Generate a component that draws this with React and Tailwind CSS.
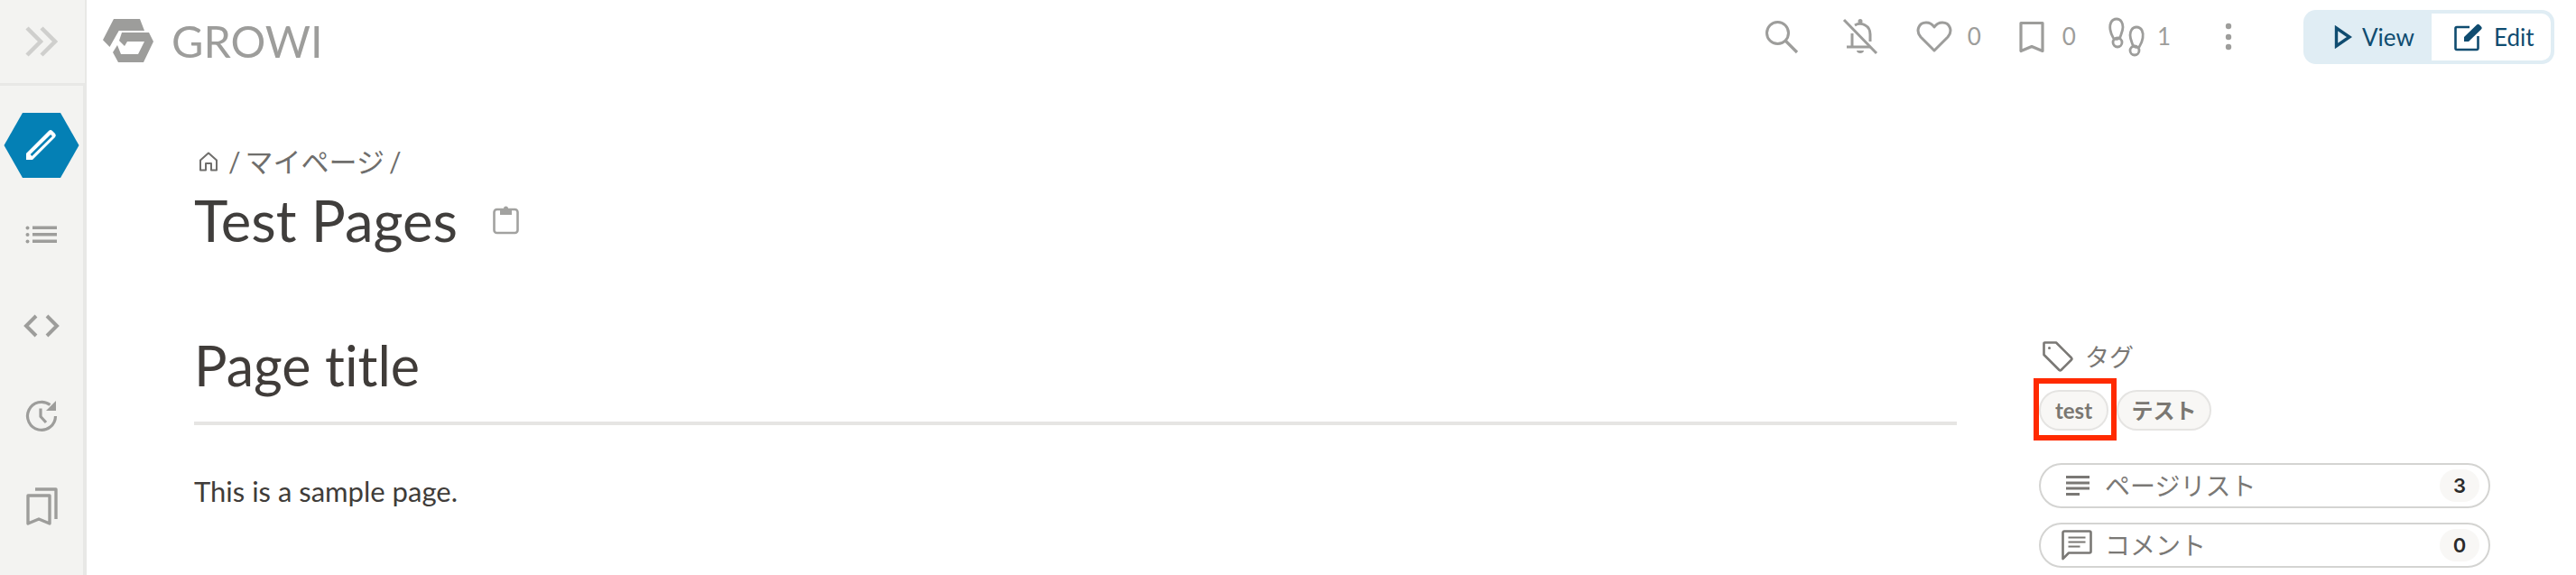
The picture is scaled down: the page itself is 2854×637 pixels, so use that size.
import React from 'react';

const Icon = ({ className, viewBox = '0 0 24 24', children }) => (
  <svg className={className} viewBox={viewBox} fill="none" stroke="currentColor" strokeWidth="2" strokeLinejoin="round">
    {children}
  </svg>
);

const GrowiLogo = () => (
  <svg className="w-[70px] h-[60px] text-[#9d9d9b]" viewBox="0 0 70 60" fill="currentColor">
    <polygon points="4,29.3 16,6 45,6 50,19 21.7,19 11.5,37" />
    <polygon points="25,21 55,21 60,31 49,54 21,54 15,43 20,35 24,45 43,45 50,31 31,31 28,36 22,30" />
  </svg>
);

const SidebarNav = () => (
  <div className="flex w-[96px] flex-col bg-[#f3f3f1]">
    <div className="flex h-[95px] items-center justify-center border-r-2 border-b-[3px] border-[#e8e8e6] pr-[3px]">
      <Icon className="w-[36px] h-[34px] text-[#cfcfcd]" viewBox="0 0 36 34">
        <path d="M2 2l15 15L2 32M18 2l15 15-15 15" strokeWidth="4.5" strokeLinejoin="miter" />
      </Icon>
    </div>
    <div className="flex flex-1 flex-col items-center border-r-4 border-[#e8e8e6] pt-[30px] text-[#9d9d9b]">
      <div className="relative flex h-[72px] w-[84px] items-center justify-center">
        <svg className="absolute inset-0 w-[84px] h-[72px]" viewBox="0 0 84 72">
          <polygon points="0.5,36 21,0 63,0 83.5,36 63,72 21,72" fill="#0480b5" />
        </svg>
        <svg className="relative w-[38px] h-[38px] text-white" viewBox="0 0 38 38" fill="none" stroke="currentColor">
          <path d="M2 28L27 3a3 3 0 0 1 4 0l3 3a3 3 0 0 1 0 4L9 35H2z" fill="currentColor" stroke="none" />
          <path d="M7.500 30L30 8" stroke="#0480b5" strokeWidth="2.500" />
        </svg>
      </div>
      <svg className="mt-[53px] w-[36px] h-[20px]" viewBox="0 0 36 20" fill="currentColor">
        <circle cx="2.500" cy="2.500" r="2" />
        <circle cx="2.500" cy="10" r="2" />
        <circle cx="2.500" cy="17.500" r="2" />
        <rect x="8" y="0.500" width="27" height="3.500" />
        <rect x="8" y="8" width="27" height="3.500" />
        <rect x="8" y="15.500" width="27" height="3.500" />
      </svg>
      <Icon className="mt-[78px] w-[42px] h-[26px]" viewBox="0 0 42 26">
        <path d="M15 2L4 13l11 11M27 2l11 11-11 11" strokeWidth="4" strokeLinejoin="miter" />
      </Icon>
      <Icon className="mt-[69px] w-[36px] h-[36px]" viewBox="0 0 36 36">
        <path d="M33.500 18a15.500 15.500 0 1 1-6-12.400" strokeWidth="3.200" />
        <path d="M34 1v11H23" fill="currentColor" stroke="none" />
        <path d="M17 9.500v9l6 6.500" strokeWidth="3.200" />
      </Icon>
      <Icon className="mt-[60px] w-[36px] h-[44px]" viewBox="0 0 36 44">
        <path d="M3 10h24v31l-12-5-12 5z" strokeWidth="3.400" />
        <path d="M11 3h23v33" strokeWidth="3.400" />
      </Icon>
    </div>
  </div>
);

const Count = ({ children }) => (
  <span className="text-[26px] leading-none text-[#9d9d9b]">{children}</span>
);

const TopBar = () => (
  <div className="flex h-[94px] shrink-0 items-start pl-[14px] pr-[24px]">
    <div className="flex items-center pt-[15px]">
      <GrowiLogo />
      <span className="ml-[10px] text-[48.500px] leading-[60px] text-[#9d9d9b]">GROWI</span>
    </div>
    <div className="ml-auto flex items-center pt-[11px] text-[#9d9d9b]">
      <Icon className="w-[38px] h-[38px]" viewBox="0 0 38 38">
        <circle cx="14.500" cy="14.500" r="12" strokeWidth="3" />
        <path d="M23.500 23.500L36 36" strokeWidth="3.200" />
      </Icon>
      <Icon className="ml-[48px] w-[40px] h-[42px]" viewBox="0 0 40 42">
        <path d="M2 2l36 37" strokeWidth="3" />
        <path d="M11 17v15M5 32h26" strokeWidth="3" />
        <path d="M14 8c7-4 17 0 17 10v8" strokeWidth="3" />
        <circle cx="20" cy="3.500" r="2.500" fill="currentColor" stroke="none" />
        <path d="M16 36h8c0 4-8 4-8 0z" fill="currentColor" stroke="none" />
      </Icon>
      <Icon className="ml-[42px] w-[40px] h-[36px]" viewBox="0 0 40 36">
        <path d="M20 33L5 18C-1 11 3 2 11 2c4 0 7 2 9 5 2-3 5-5 9-5 8 0 12 9 6 16z" strokeWidth="3" />
      </Icon>
      <span className="ml-[17px]"><Count>0</Count></span>
      <Icon className="ml-[42px] w-[28px] h-[36px]" viewBox="0 0 28 36">
        <path d="M2 2.500h24v31l-12-5-12 5z" strokeWidth="3.200" />
      </Icon>
      <span className="ml-[20px]"><Count>0</Count></span>
      <Icon className="ml-[36px] w-[42px] h-[44px]" viewBox="0 0 42 44">
        <path d="M9 2c-6 0-8 6-7 12s3 8 4 10c3 1 6 0 7-2 1-3 3-7 3-11S14 2 9 2z" strokeWidth="2.800" />
        <circle cx="10" cy="28" r="5" strokeWidth="2.800" />
        <path d="M31 11c6 0 8 6 7 12s-3 8-4 10c-3 1-6 0-7-2-1-3-3-7-3-11s2-9 7-9z" strokeWidth="2.800" />
        <circle cx="29" cy="37" r="5" strokeWidth="2.800" />
      </Icon>
      <span className="ml-[12px]"><Count>1</Count></span>
      <svg className="ml-[60px] w-[8px] h-[32px]" viewBox="0 0 8 32" fill="currentColor">
        <circle cx="4" cy="4" r="3.200" />
        <circle cx="4" cy="16" r="3.200" />
        <circle cx="4" cy="27" r="3.200" />
      </svg>
      <div className="ml-[79px] flex h-[60px] w-[278px] rounded-[14px] bg-[#e0edf4] p-[4px] text-[26px] text-[#0f4c70]">
        <div className="flex w-[138px] items-center pl-[30px]">
          <Icon className="w-[20px] h-[26px]" viewBox="0 0 20 26">
            <path d="M2.500 3v20L17 13z" strokeWidth="3.400" strokeLinejoin="miter" />
          </Icon>
          <span className="ml-[11px]">View</span>
        </div>
        <div className="flex flex-1 items-center rounded-r-[10px] bg-white pl-[25px]">
          <Icon className="w-[32px] h-[32px]" viewBox="0 0 32 32">
            <path d="M17 5H3a1.500 1.500 0 0 0-1.500 1.500v22A1.500 1.500 0 0 0 3 30h22a1.500 1.500 0 0 0 1.500-1.500V15" strokeWidth="2.600" />
            <path d="M11 21v-5L25 2.500a2 2 0 0 1 3 0l2 2a2 2 0 0 1 0 3L16 21z" fill="currentColor" stroke="none" />
          </Icon>
          <span className="ml-[12px]">Edit</span>
        </div>
      </div>
    </div>
  </div>
);

const PageHead = () => (
  <div>
    <div className="flex h-[44px] items-center text-[30px] text-[#6f6e6c]">
      <Icon className="ml-[6px] w-[20px] h-[22px]" viewBox="0 0 20 22">
        <path d="M1 9.500L10 1.500l9 8V20.500H13V13H7v7.500H1z" strokeWidth="2" />
      </Icon>
      <span className="ml-[12px]">/</span>
      <span className="ml-[5px] text-[31px]">マイページ</span>
      <span className="ml-[5px]">/</span>
    </div>
    <div className="mt-[6px] flex items-center">
      <h1 className="text-[63.500px] leading-[74px] text-[#403e3c]">Test Pages</h1>
      <Icon className="ml-[39px] w-[30px] h-[32px] text-[#a2a2a0]" viewBox="0 0 30 32">
        <rect x="1.500" y="4" width="26" height="26" rx="3" strokeWidth="2.600" />
        <path d="M8 4h13v6H8z" fill="currentColor" stroke="none" />
        <circle cx="14.500" cy="3" r="2.500" fill="currentColor" stroke="none" />
      </Icon>
    </div>
  </div>
);

const PageBody = () => (
  <div className="mt-[88px] w-[1953px] text-[#403c39]">
    <h2 className="text-[61px] leading-[72px] pb-[26px] border-b-[4px] border-[#e6e5e3] [font-variant-ligatures:none]">Page title</h2>
    <p className="mt-[49px] text-[31px] leading-[48px]">This is a sample page.</p>
  </div>
);

const CountPill = ({ icon, label, count }) => (
  <div className="flex h-[50px] items-center rounded-full border-[2px] border-[#d4d4d2] pr-[10px] text-[#7a7875]">
    <div className="flex w-[54px] items-center justify-end">{icon}</div>
    <span className="ml-[17px] text-[28px] leading-none">{label}</span>
    <span className="ml-auto flex h-[36px] w-[44px] items-center justify-center rounded-full bg-[#f8f7f5] font-['Inter',sans-serif] text-[22px] font-semibold text-[#2a2a2a]">{count}</span>
  </div>
);

const SideColumn = () => (
  <div className="ml-[91px] w-[500px] pt-[283px]">
    <div className="flex h-[36px] items-center pl-[4px] text-[#7a7875]">
      <Icon className="w-[34px] h-[34px]" viewBox="0 0 34 34">
        <path d="M1.500 2.500a1 1 0 0 1 1-1H15l17 17a1.500 1.500 0 0 1 0 2L20.500 32a1.500 1.500 0 0 1-2 0L1.500 15z" strokeWidth="2.600" />
        <circle cx="7.500" cy="7.500" r="1.500" fill="currentColor" stroke="none" />
      </Icon>
      <span className="ml-[13px] text-[27px] leading-none">タグ</span>
    </div>
    <div className="mt-[19px] flex">
      <div className="relative">
        <span className="flex h-[45px] w-[77px] items-center justify-center rounded-full border-[2px] border-[#e5e4e2] bg-[#f8f7f5] text-[24px] font-bold text-[#7a7772]">test</span>
        <div className="absolute left-[-6px] top-[-13px] h-[69px] w-[92px] border-[6px] border-[#ff2a00]" />
      </div>
      <span className="ml-[9px] flex h-[45px] w-[105px] items-center justify-center rounded-full border-[2px] border-[#e5e4e2] bg-[#f8f7f5] text-[24px] font-bold text-[#7a7772]">テスト</span>
    </div>
    <div className="mt-[36px] flex flex-col gap-[16px]">
      <CountPill
        label="ページリスト"
        count="3"
        icon={
          <svg className="w-[26px] h-[22px]" viewBox="0 0 26 22" fill="currentColor">
            <rect y="0" width="26" height="3" />
            <rect y="6.500" width="26" height="3" />
            <rect y="12.500" width="26" height="3" />
            <rect y="19" width="15" height="3" />
          </svg>
        }
      />
      <CountPill
        label="コメント"
        count="0"
        icon={
          <Icon className="mr-[-3px] w-[34px] h-[34px]" viewBox="0 0 34 34">
            <path d="M1.500 32V3a1.500 1.500 0 0 1 1.500-1.500h28A1.500 1.500 0 0 1 32.500 3v21a1.500 1.500 0 0 1-1.500 1.500H8z" strokeWidth="2.600" />
            <path d="M7.500 8.500h19M7.500 13.500h19M7.500 18.500h13" strokeWidth="2" />
          </Icon>
        }
      />
    </div>
  </div>
);

export default function App() {
  return (
    <div className="flex h-[637px] w-[2854px] overflow-hidden bg-white font-['Lato','Noto_Sans_CJK_JP',sans-serif]">
      <SidebarNav />
      <div className="flex min-w-0 flex-1 flex-col">
        <TopBar />
        <div className="flex pl-[119px]">
          <div className="pt-[63px]">
            <PageHead />
            <PageBody />
          </div>
          <SideColumn />
        </div>
      </div>
    </div>
  );
}
